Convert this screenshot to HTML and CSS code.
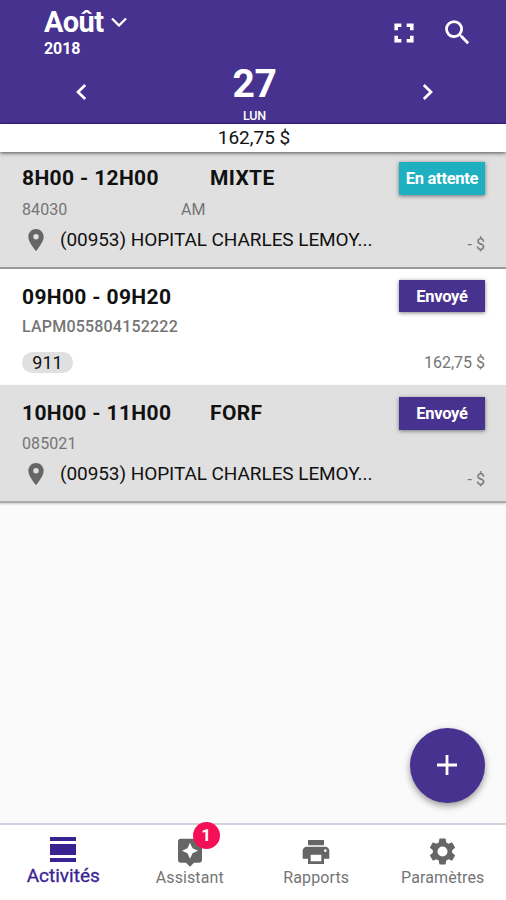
FILE: index.html
```html
<!DOCTYPE html>
<html lang="fr">
<head>
<meta charset="utf-8">
<title>Activités</title>
<link rel="stylesheet" href="styles.css">
</head>
<body>
<div class="app">
  <header class="header">
    <div class="topbar">
      <div class="date">
        <div class="month"><span>Août</span><svg class="caret" viewBox="0 0 16 10"><path d="M1 1.5l7 7 7-7" fill="none" stroke="currentColor" stroke-width="2.3"/></svg></div>
        <div class="year">2018</div>
      </div>
      <div class="tools">
        <svg width="32" height="32" viewBox="0 0 24 24"><path d="M4.800 10h2.700V7.500H10V4.800H4.800zM14 4.800v2.700h2.500V10h2.700V4.800zM4.800 14v5.200H10v-2.700H7.500V14zM16.500 14v2.500H14v2.700h5.200V14z"/></svg>
        <svg width="33" height="33" viewBox="0 0 24 24"><path d="M15.500 14h-.79l-.28-.27A6.470 6.470 0 0 0 16 9.500 6.500 6.500 0 1 0 9.500 16c1.610 0 3.090-.59 4.230-1.570l.27.280v.790l5 4.990L20.490 19l-4.990-5zm-6 0a4.500 4.500 0 1 1 0-9 4.500 4.500 0 0 1 0 9z"/></svg>
      </div>
    </div>
    <div class="dayrow">
      <svg class="arrow" viewBox="0 0 12 18"><path d="M10.200 2L3 9l7.200 7" fill="none" stroke="currentColor" stroke-width="2.700"/></svg>
      <div class="day"><div class="num">27</div><div class="dow">LUN</div></div>
      <svg class="arrow" viewBox="0 0 12 18"><path d="M1.800 2L9 9l-7.200 7" fill="none" stroke="currentColor" stroke-width="2.700"/></svg>
    </div>
  </header>
  <div class="total"><span>162,75 $</span></div>
  <main class="list">
    <article class="card grey first">
      <div class="info">
        <div class="title"><span class="time">8H00 - 12H00</span><span class="kind">MIXTE</span></div>
        <div class="sub"><span class="code">84030</span><span>AM</span></div>
        <div class="place"><svg class="pin" viewBox="5 2 14 20"><path d="M12 2C8.130 2 5 5.130 5 9c0 5.250 7 13 7 13s7-7.750 7-13c0-3.870-3.130-7-7-7zm0 9.500a2.500 2.500 0 1 1 0-5 2.500 2.500 0 0 1 0 5z"/></svg><span>(00953) HOPITAL CHARLES LEMOY...</span></div>
      </div>
      <div class="side"><span class="status wait">En attente</span><span class="amount">- $</span></div>
    </article>
    <article class="card white">
      <div class="info">
        <div class="title"><span class="time">09H00 - 09H20</span></div>
        <div class="sub strong">LAPM055804152222</div>
        <div class="chip"><span>911</span></div>
      </div>
      <div class="side"><span class="status">Envoyé</span><span class="amount">162,75 $</span></div>
    </article>
    <article class="card grey last">
      <div class="info">
        <div class="title"><span class="time">10H00 - 11H00</span><span class="kind">FORF</span></div>
        <div class="sub"><span class="code">085021</span></div>
        <div class="place"><svg class="pin" viewBox="5 2 14 20"><path d="M12 2C8.130 2 5 5.130 5 9c0 5.250 7 13 7 13s7-7.750 7-13c0-3.870-3.130-7-7-7zm0 9.500a2.500 2.500 0 1 1 0-5 2.500 2.500 0 0 1 0 5z"/></svg><span>(00953) HOPITAL CHARLES LEMOY...</span></div>
      </div>
      <div class="side"><span class="status">Envoyé</span><span class="amount">- $</span></div>
    </article>
  </main>
  <div class="fab"><svg width="20" height="20" viewBox="0 0 20 20"><path d="M10 0v20M0 10h20" stroke="currentColor" stroke-width="2.800"/></svg></div>
  <nav class="nav">
    <div class="tab active">
      <span class="icon"><svg width="26" height="25" viewBox="0 0 26 25"><path d="M0 0h26v4H0zM0 7h26v11H0zM0 21h26v4H0z"/></svg></span>
      <span class="label">Activités</span>
    </div>
    <div class="tab">
      <span class="icon"><svg width="32" height="32" viewBox="0 0 24 24"><path d="M19 2H5c-1.100 0-2 .9-2 2v14c0 1.100.9 2 2 2h4l3 3 3-3h4c1.100 0 2-.9 2-2V4c0-1.100-.9-2-2-2zm-5.120 10.880L12 17l-1.880-4.120L6 11l4.120-1.880L12 5l1.880 4.120L18 11z"/></svg><span class="badge">1</span></span>
      <span class="label">Assistant</span>
    </div>
    <div class="tab">
      <span class="icon"><svg width="32" height="32" viewBox="0 0 24 24"><path d="M19 8H5c-1.660 0-3 1.340-3 3v6h4v4h12v-4h4v-6c0-1.660-1.340-3-3-3zm-3 11H8v-5h8zm3-7a1 1 0 1 1 0-2 1 1 0 0 1 0 2zM18 3H6v4h12z"/></svg></span>
      <span class="label">Rapports</span>
    </div>
    <div class="tab">
      <span class="icon"><svg width="31" height="31" viewBox="0 0 24 24"><path d="M19.430 12.980c.04-.32.070-.64.070-.98s-.03-.66-.07-.98l2.110-1.650c.19-.15.240-.42.120-.64l-2-3.460c-.12-.22-.39-.3-.61-.22l-2.490 1c-.52-.4-1.080-.73-1.690-.98l-.38-2.650A.488.488 0 0 0 14 2h-4c-.25 0-.46.180-.49.420l-.38 2.650c-.61.250-1.170.590-1.690.980l-2.490-1c-.23-.09-.49 0-.61.220l-2 3.460c-.13.220-.07.490.120.640l2.110 1.650c-.04.320-.07.650-.07.980s.030.660.070.980l-2.110 1.650c-.19.150-.24.420-.12.640l2 3.460c.12.220.39.300.61.220l2.490-1c.52.400 1.080.730 1.690.980l.38 2.650c.03.240.240.420.490.420h4c.25 0 .46-.18.490-.42l.38-2.650c.61-.25 1.170-.59 1.690-.98l2.490 1c.23.090.490 0 .61-.22l2-3.460c.12-.22.070-.49-.12-.64zM12 15.900a3.900 3.900 0 1 1 0-7.800 3.900 3.900 0 0 1 0 7.800z"/></svg></span>
      <span class="label">Paramètres</span>
    </div>
  </nav>
</div>
</body>
</html>
```

FILE: styles.css
```css
* { box-sizing: border-box; }
body { margin: 0; font-family: Roboto, "Liberation Sans", sans-serif; color: #111; }
svg { display: block; fill: currentColor; flex: none; }
.app { position: relative; width: 506px; height: 900px; overflow: hidden; display: flex; flex-direction: column; background: #fafafa; }

.header { height: 124px; flex: none; background: #48328f; color: #fff; border-bottom: 1px solid #3b2488; }
.topbar { height: 64px; display: flex; justify-content: space-between; padding: 0 32px 0 44px; }
.date { padding-top: 6px; }
.month { display: flex; align-items: center; gap: 8px; font-size: 29px; line-height: 32px; font-weight: 700; letter-spacing: -0.6px; }
.caret { width: 16px; height: 10px; }
.year { margin-top: 1px; font-size: 16px; line-height: 20px; font-weight: 700; letter-spacing: -0.1px; }
.tools { display: flex; align-items: center; gap: 21px; padding-top: 1px; }
.dayrow { height: 60px; display: flex; justify-content: space-between; padding: 0 72px 0 75px; }
.arrow { width: 12px; height: 18px; margin-top: 19px; }
.day { text-align: center; }
.num { font-size: 39px; line-height: 40px; font-weight: 700; letter-spacing: -0.5px; }
.dow { font-size: 12.5px; line-height: 16px; margin-top: 4px; font-weight: 500; letter-spacing: -0.2px; }

.total { height: 28px; flex: none; position: relative; z-index: 1; background: #fff; padding-left: 2px; text-align: center; font-size: 19px; line-height: 28px; box-shadow: 0 1px 4px rgba(0,0,0,.65); }

.card { display: flex; justify-content: space-between; height: 117px; padding: 14px 21px 0 22px; }
.grey { background: #e0e0e0; }
.white { background: #fff; height: 116px; }
.first { padding-top: 13px; border-bottom: 2px solid #999; }
.last { border-bottom: 2px solid #aaa; box-shadow: 0 1px 2px rgba(0,0,0,.2); height: 118px; }
.title { display: flex; height: 28px; font-size: 21px; line-height: 28px; font-weight: 700; white-space: nowrap; letter-spacing: 0.35px; }
.first .title { line-height: 26px; }
.time { width: 188px; }
.sub { display: flex; height: 24px; margin-top: 5px; font-size: 16px; line-height: 24px; color: #757575; }
.code { width: 159px; letter-spacing: 0.1px; }
.strong { margin-top: 4px; font-weight: 500; letter-spacing: 0.2px; }
.place { display: flex; align-items: center; height: 28px; margin-top: 4px; font-size: 19px; line-height: 28px; white-space: nowrap; letter-spacing: -0.07px; }
.pin { width: 16px; height: 22px; margin: 0 16px 0 6px; color: #666; }
.chip { width: 51px; height: 21px; margin-top: 13px; border-radius: 11px; background: #e0e0e0; font-size: 18px; line-height: 21px; text-align: center; }
.side { display: flex; flex-direction: column; align-items: flex-end; }
.status { width: 86px; height: 33px; margin-top: -3px; background: #48328f; color: #fff; font-size: 16.5px; line-height: 34px; font-weight: 700; text-align: center; letter-spacing: -0.3px; box-shadow: 0 1px 4px rgba(0,0,0,.5); }
.white .status { height: 32px; margin-bottom: 1px; }
.last .status { margin-top: -2px; }
.wait { background: #1eafc0; }
.amount { margin-top: 40px; font-size: 16px; line-height: 20px; color: #757575; }

.fab { position: absolute; left: 410px; top: 728px; width: 75px; height: 75px; padding: 0 1px 1px 0; border-radius: 50%; background: #48328f; color: #fff; display: flex; align-items: center; justify-content: center; box-shadow: 0 3px 7px rgba(0,0,0,.4); }

.nav { margin-top: auto; height: 77px; flex: none; display: flex; background: #fff; border-top: 2px solid #d4d0e0; }
.tab { flex: 1; display: flex; flex-direction: column; align-items: center; color: #666; }
.icon { position: relative; height: 40px; display: flex; align-items: center; padding-top: 13px; margin-bottom: 2px; }
.label { font-size: 16px; line-height: 22px; white-space: nowrap; color: #757575; letter-spacing: 0.1px; }
.active, .active .label { color: #392391; }
.active .icon { padding-top: 8px; margin-bottom: 0; }
.active .label { font-size: 19px; font-weight: 400; letter-spacing: 0; -webkit-text-stroke: 0.3px #392391; }
.badge { position: absolute; left: 19px; top: -3px; width: 27px; height: 27px; border-radius: 50%; background: #f50f58; color: #fff; font-size: 17px; line-height: 27px; font-weight: 700; text-align: center; }
```
